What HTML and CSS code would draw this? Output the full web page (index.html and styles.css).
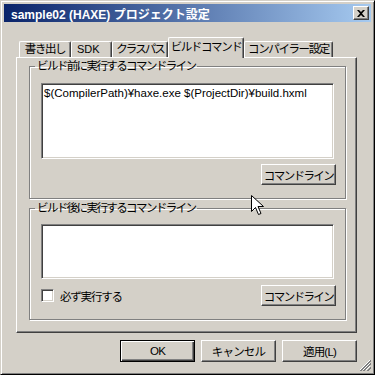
FILE: index.html
```html
<!DOCTYPE html>
<html lang="ja">
<head>
  <meta charset="UTF-8" />
  <title>sample02 (HAXE) プロジェクト設定</title>
  <link rel="stylesheet" href="styles.css">
</head>
<body>

<div class="window">
  <div class="titlebar">
    <span class="title">sample02 (HAXE) プロジェクト設定</span>
    <button class="close-btn" title="閉じる">
      <svg width="8" height="7" viewBox="0 0 8 7"><path d="M0 0h2l2 2 2-2h2L5 3.5 8 7H6L4 5 2 7H0l3-3.5z" fill="#000"/></svg>
    </button>
  </div>

  <div class="content">
    <div class="tabs">
      <div class="tab tab-w1">書き出し</div>
      <div class="tab tab-w2">SDK</div>
      <div class="tab tab-w3">クラスパス</div>
      <div class="tab tab-active">ビルドコマンド</div>
      <div class="tab tab-w5">コンパイラー設定</div>
    </div>

    <div class="panel">
      <fieldset class="group group-pre">
        <legend>ビルド前に実行するコマンドライン</legend>
        <div class="textbox textbox-pre">$(CompilerPath)¥haxe.exe $(ProjectDir)¥build.hxml</div>
        <div class="row row-right">
          <button class="btn">コマンドライン</button>
        </div>
      </fieldset>

      <fieldset class="group group-post">
        <legend>ビルド後に実行するコマンドライン</legend>
        <div class="textbox textbox-post"></div>
        <div class="row">
          <label class="check"><span class="checkbox"></span>必ず実行する</label>
          <button class="btn">コマンドライン</button>
        </div>
      </fieldset>
    </div>

    <div class="footer">
      <button class="btn btn-default">OK</button>
      <button class="btn">キャンセル</button>
      <button class="btn">適用(L)</button>
    </div>
  </div>

  <svg class="grip" width="12" height="12" viewBox="0 0 12 12">
    <path d="M11 1L1 11M11 4L4 11M11 7L7 11" stroke="#fff" stroke-width="1"/>
    <path d="M12 1L1 12M12 2L2 12M12 4L4 12M12 5L5 12M12 8L8 12M12 9L9 12" stroke="#808080" stroke-width="1"/>
  </svg>

  <svg class="cursor" width="13" height="20" viewBox="0 0 13 20">
    <path d="M0.5 0.5v16l4-4 3 7 2.5-1-3-7h5.5z" fill="#fff" stroke="#000" stroke-width="1"/>
  </svg>
</div>

</body>
</html>
```

FILE: styles.css
```css
* {
  box-sizing: border-box;
}

body {
  margin: 0;
  width: 375px;
  height: 375px;
  font-family: "Liberation Sans", "Noto Sans CJK JP", sans-serif;
  font-size: 11px;
  color: #000;
}

.window {
  position: relative;
  width: 375px;
  height: 375px;
  background: #d4d0c8;
  border: 1px solid;
  border-color: #d4d0c8 #000 #000 #d4d0c8;
  box-shadow: inset 1px 1px 0 #fff, inset -1px -1px 0 #808080;
  padding: 3px;
}

.titlebar {
  height: 18px;
  display: flex;
  align-items: center;
  justify-content: space-between;
  padding: 0 2px 0 7px;
  background: linear-gradient(to right, #0a246a, #a6caf0);
}

.title {
  color: #fff;
  font-weight: bold;
  font-size: 12px;
  white-space: nowrap;
}

.close-btn {
  width: 16px;
  height: 14px;
  padding: 0;
  display: flex;
  align-items: center;
  justify-content: center;
  background: #d4d0c8;
  border: 1px solid;
  border-color: #fff #404040 #404040 #fff;
  box-shadow: inset -1px -1px 0 #808080;
}

.content {
  padding: 0 14px 0 12px;
}

.tabs {
  display: flex;
  align-items: flex-end;
  height: 35px;
  padding: 0 0 0 3px;
}

.tab {
  height: 16px;
  border: 1px solid;
  border-bottom: none;
  border-color: #fff #404040 #fff #fff;
  border-radius: 2px 2px 0 0;
  box-shadow: inset -1px 0 0 #808080;
  text-align: center;
  line-height: 15px;
  white-space: nowrap;
  overflow: hidden;
  font-size: 11.5px;
  letter-spacing: -1.4px;
}

.tab-w1 { width: 52px; }
.tab-w2 { width: 41px; letter-spacing: 0; text-align: left; padding-left: 5px; font-size: 11px; }
.tab-w3 { width: 56px; letter-spacing: -2px; }
.tab-w5 { width: 89px; }

.tab-active {
  position: relative;
  z-index: 1;
  width: 76px;
  height: 21px;
  margin-bottom: -1px;
  background: #d4d0c8;
  line-height: 18px;
}

.panel {
  width: 341px;
  height: 276px;
  border: 1px solid;
  border-color: #fff #404040 #404040 #fff;
  box-shadow: inset -1px -1px 0 #808080;
  padding: 1px 0 0 12px;
}

.group {
  width: 317px;
  margin: 0;
  padding: 0 11px;
  border: 1px solid #808080;
  box-shadow: 1px 1px 0 #fff, inset 1px 1px 0 #fff;
}

.group legend {
  padding: 0 2px;
  margin-left: -6px;
  height: 14px;
  line-height: 14px;
  font-size: 11.5px;
  letter-spacing: -1.6px;
}

.group-pre {
  height: 140px;
}

.group-post {
  height: 119px;
  margin-top: 2px;
}

.textbox {
  background: #fff;
  border: 1px solid;
  border-color: #808080 #fff #fff #808080;
  box-shadow: inset 1px 1px 0 #404040, inset -1px -1px 0 #d4d0c8;
  padding: 3px 2px;
  white-space: nowrap;
  font-size: 11.5px;
}

.textbox-pre {
  height: 76px;
  margin-top: 10px;
}

.textbox-post {
  height: 55px;
  margin-top: 9px;
}

.row {
  display: flex;
  align-items: center;
  justify-content: space-between;
  margin-right: -2px;
}

.row-right {
  justify-content: flex-end;
  margin-top: 5px;
}

.group-post .row {
  margin-top: 6px;
}

.check {
  display: flex;
  align-items: center;
  gap: 6px;
  font-size: 11.5px;
  letter-spacing: -1.2px;
}

.checkbox {
  width: 13px;
  height: 13px;
  background: #fff;
  border: 1px solid;
  border-color: #808080 #fff #fff #808080;
  box-shadow: inset 1px 1px 0 #404040, inset -1px -1px 0 #d4d0c8;
}

.btn {
  width: 75px;
  height: 21px;
  padding: 0;
  font-family: inherit;
  font-size: 11.5px;
  letter-spacing: -1.6px;
  background: #d4d0c8;
  border: 1px solid;
  border-color: #fff #404040 #404040 #fff;
  box-shadow: inset -1px -1px 0 #808080;
  color: #000;
}

.footer {
  display: flex;
  justify-content: flex-end;
  gap: 6px;
  margin-top: 7px;
  width: 341px;
}

.footer .btn {
  height: 22px;
  letter-spacing: -0.8px;
}

.btn-default {
  border-color: #000;
  box-shadow: inset 1px 1px 0 #fff, inset -1px -1px 0 #404040, inset -2px -2px 0 #808080;
}

.grip {
  position: absolute;
  right: 3px;
  bottom: 3px;
}

.cursor {
  position: absolute;
  left: 250px;
  top: 194px;
}
```
